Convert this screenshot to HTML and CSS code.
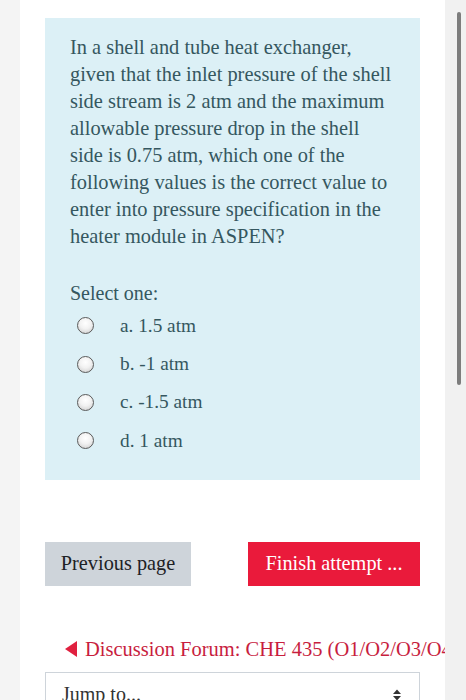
FILE: index.html
```html
<!DOCTYPE html>
<html>
<head>
<meta charset="utf-8">
<link rel="stylesheet" href="styles.css">
</head>
<body>
<div class="page">
  <div class="gutter"></div>
  <main class="main">
    <div class="formulation">
      <p class="qtext">In a shell and tube heat exchanger, given that the inlet pressure of the shell side stream is 2 atm and the maximum allowable pressure drop in the shell side is 0.75 atm, which one of the following values is the correct value to enter into pressure specification in the heater module in ASPEN?</p>
      <div class="prompt">Select one:</div>
      <div class="answers">
        <label class="opt"><span class="radio"></span><span class="lbl">a. 1.5 atm</span></label>
        <label class="opt"><span class="radio"></span><span class="lbl">b. -1 atm</span></label>
        <label class="opt"><span class="radio"></span><span class="lbl">c. -1.5 atm</span></label>
        <label class="opt"><span class="radio"></span><span class="lbl">d. 1 atm</span></label>
      </div>
    </div>
    <div class="nav">
      <button class="btn btn-prev">Previous page</button>
      <button class="btn btn-finish">Finish attempt ...</button>
    </div>
    <div class="activity-link"><span class="tri"></span><span class="link-text">Discussion Forum: CHE 435 (O1/O2/O3/O4)</span></div>
    <div class="jump">
      <span>Jump to...</span>
      <svg class="updown" width="10" height="14" viewBox="0 0 10 14"><path d="M1 6 L5 1.5 L9 6 Z M1 8 L5 12.5 L9 8 Z" fill="#333"/></svg>
    </div>
  </main>
  <div class="rail"><div class="thumb"></div></div>
</div>
</body>
</html>
```

FILE: styles.css
```css
html, body {
  margin: 0;
  padding: 0;
  height: 100%;
  overflow: hidden;
}
body {
  background: #f4f4f4;
  font-family: "Liberation Serif", "Times New Roman", serif;
}
.page {
  display: flex;
  height: 700px;
}
.gutter {
  width: 20px;
  flex: none;
  background: #f4f4f4;
}
.main {
  width: 425px;
  flex: none;
  background: #fff;
  padding: 18px 0 0 25px;
  box-sizing: border-box;
  overflow: hidden;
}
.rail {
  width: 21px;
  flex: none;
  background: #f1f1f1;
  position: relative;
}
.thumb {
  position: absolute;
  left: 12px;
  top: 12px;
  width: 4px;
  height: 373px;
  border-radius: 2px;
  background: #7d7d7d;
}
.formulation {
  width: 375px;
  box-sizing: border-box;
  background: #dcf0f6;
  color: #35575f;
  padding: 15.5px 25px 25.5px 25px;
}
.qtext {
  margin: 0;
  font-size: 20.4px;
  line-height: 27.1px;
}
.prompt {
  margin-top: 30px;
  font-size: 20px;
  line-height: 27px;
}
.answers {
  display: flex;
  flex-direction: column;
  gap: 11.3px;
  margin-top: 5px;
  padding-left: 7px;
}
.opt {
  display: flex;
  align-items: center;
  gap: 26px;
  height: 27px;
  font-size: 19.3px;
}
.radio {
  width: 15px;
  height: 15px;
  border: 1.6px solid #5a5a5a;
  border-radius: 50%;
  background: radial-gradient(circle at 50% 35%, #ffffff 0%, #f2f2f2 45%, #c9c9c9 100%);
  flex: none;
}
.nav {
  display: flex;
  justify-content: space-between;
  width: 375px;
  margin-top: 62px;
}
.btn {
  height: 44px;
  border: none;
  font-family: "Liberation Serif", "Times New Roman", serif;
  font-size: 20.3px;
  padding: 0;
}
.btn-prev {
  width: 146px;
  background: #ced4da;
  color: #1d2125;
}
.btn-finish {
  width: 172px;
  background: #ea1a3b;
  color: #fff;
}
.activity-link {
  display: flex;
  align-items: center;
  gap: 8px;
  margin-top: 52px;
  padding-left: 20px;
  white-space: nowrap;
  color: #c81e3e;
  font-size: 20.5px;
  line-height: 22px;
}
.tri {
  width: 0;
  height: 0;
  border-top: 8px solid transparent;
  border-bottom: 8px solid transparent;
  border-right: 12px solid #e0203f;
  flex: none;
}
.jump {
  display: flex;
  align-items: center;
  justify-content: space-between;
  width: 375px;
  height: 44px;
  box-sizing: border-box;
  margin-top: 12px;
  border: 1px solid #ced4da;
  padding: 2px 17px 0 16px;
  font-size: 20px;
  color: #333;
}
```
